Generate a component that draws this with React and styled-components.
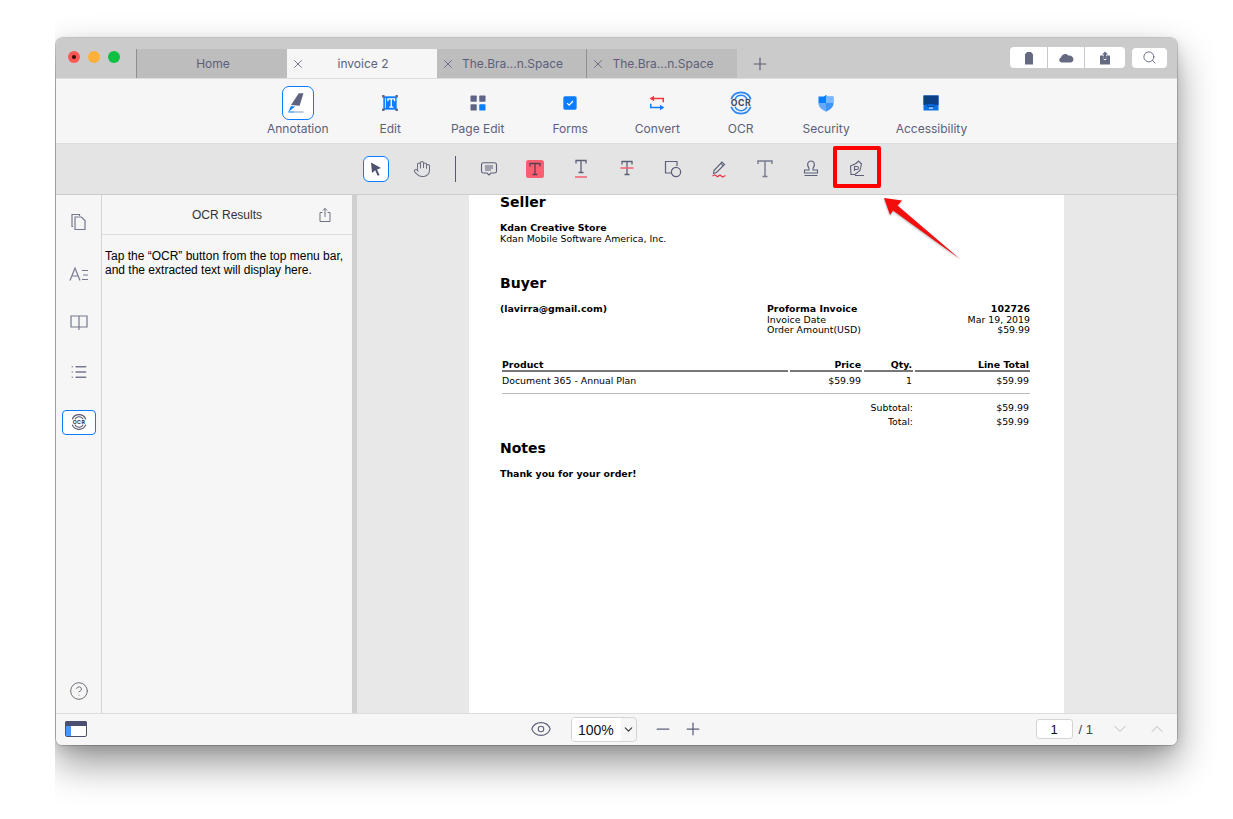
import React from "react";
import styled, { createGlobalStyle } from "styled-components";
import {
  X, Plus, Minus, Search, Hand, Eye, ChevronDown, ChevronUp, CircleHelp, List,
} from "lucide-react";

const INK = "#5c5f7a";
const BLUE = "#0a7cff";

const GlobalStyle = createGlobalStyle`
  html, body { margin: 0; padding: 0; background: #fff; }
  body { font-family: Inter, "Liberation Sans", sans-serif; }
  * { box-sizing: border-box; }
`;

const Clip = styled.div`
  width: 1178px;
  height: 819px;
  margin-left: 55px;
  padding: 38px 0 0 1px;
  overflow: hidden;
`;
const Spill = styled.div`
  width: 1121px;
`;
const Window = styled.div`
  position: relative;
  width: 1121px;
  height: 707px;
  display: flex;
  flex-direction: column;
  border-radius: 6px;
  overflow: hidden;
`;
const WindowShadow = styled.div`
  border-radius: 6px;
  box-shadow: 0 0 0 0.5px rgba(0, 0, 0, 0.35), 0 18px 38px rgba(0, 0, 0, 0.42), 0 4px 12px rgba(0, 0, 0, 0.12);
`;

/* title bar */
const TitleBar = styled.div`
  height: 41px;
  flex: none;
  display: flex;
  align-items: flex-end;
  padding-left: 12px;
  background: #cbcbcb;
  border-bottom: 1px solid #dedede;
`;
const Lights = styled.div`
  display: flex;
  gap: 8px;
  align-self: flex-start;
  margin-top: 13px;
  margin-right: 16px;
`;
const Light = styled.span`
  width: 12px;
  height: 12px;
  border-radius: 50%;
  background: ${(p) => p.$color};
  display: flex;
  align-items: center;
  justify-content: center;
`;
const LightDot = styled.span`
  width: 4px;
  height: 4px;
  border-radius: 50%;
  background: #3a0a08;
`;
const Tabs = styled.div`
  display: flex;
  height: 29px;
  border-left: 1px solid #8f8f8f;
`;
const Tab = styled.div`
  width: 150px;
  display: grid;
  grid-template-columns: 21px 1fr 19px;
  align-items: center;
  color: ${INK};
  font-size: 12px;
  text-align: center;
  white-space: nowrap;
  background: ${(p) => (p.$active ? "#f6f6f6" : "#bdbdbd")};
  border-right: ${(p) => (p.$line ? "1px solid #8f8f8f" : "none")};
`;
const TabClose = styled.span`
  display: flex;
  padding-left: 4px;
  color: ${INK};
`;
const NewTab = styled.span`
  display: flex;
  margin: 0 0 4px 13px;
  color: ${INK};
`;
const TitleRight = styled.div`
  margin-left: auto;
  align-self: flex-start;
  display: flex;
  align-items: center;
  gap: 7px;
  margin-top: 9px;
  margin-right: 10px;
`;
const ActionGroup = styled.div`
  display: flex;
  height: 21px;
  border-radius: 4px;
  background: #fff;
`;
const ActionCell = styled.span`
  width: ${(p) => p.$w}px;
  display: flex;
  align-items: center;
  justify-content: center;
  border-right: ${(p) => (p.$last ? "none" : "1px solid #c8c8c8")};
`;
const SearchBtn = styled.span`
  width: 35px;
  height: 20px;
  display: flex;
  align-items: center;
  justify-content: center;
  border-radius: 4px;
  background: #fff;
  color: ${INK};
`;

/* main toolbar */
const ToolBar = styled.div`
  height: 65px;
  flex: none;
  display: flex;
  align-items: flex-start;
  padding-left: 211px;
  background: #f6f6f6;
  border-bottom: 1px solid #dcdcdc;
`;
const Tool = styled.div`
  display: flex;
  flex-direction: column;
  align-items: center;
  margin-left: ${(p) => p.$gap}px;
  font-size: 12px;
  line-height: 15px;
  color: ${INK};
  white-space: nowrap;
`;
const ToolIcon = styled.div`
  width: ${(p) => (p.$active ? 32 : 20)}px;
  height: 34px;
  margin: 7px 0 1px;
  display: flex;
  align-items: center;
  justify-content: center;
  border-radius: 7px;
  border: ${(p) => (p.$active ? `1px solid ${BLUE}` : "none")};
  background: ${(p) => (p.$active ? "#fff" : "transparent")};
`;

/* annotation bar */
const AnnotBar = styled.div`
  height: 51px;
  flex: none;
  display: flex;
  align-items: center;
  padding: 0 0 1px 297px;
  background: #e4e4e4;
  border-bottom: 1px solid #cdcdcd;
`;
const AnnotCell = styled.div`
  width: 46px;
  height: 26px;
  display: flex;
  align-items: center;
  justify-content: center;
`;
const SelectBtn = styled.div`
  width: 26px;
  height: 26px;
  display: flex;
  align-items: center;
  justify-content: center;
  border-radius: 6px;
  border: 1px solid ${BLUE};
  background: #fff;
`;
const AnnotDivider = styled.div`
  width: 1px;
  height: 26px;
  margin: 0 10px;
  background: #55586f;
`;

/* body */
const Main = styled.div`
  flex: 1;
  min-height: 0;
  display: flex;
`;
const Rail = styled.div`
  width: 46px;
  flex: none;
  display: flex;
  flex-direction: column;
  align-items: center;
  padding: 2px 0 12px;
  background: #f6f6f6;
  border-right: 1px solid #d4d4d4;
`;
const RailItem = styled.div`
  height: 50px;
  display: flex;
  align-items: center;
  justify-content: center;
  color: #75788e;
`;
const RailActive = styled.div`
  width: 34px;
  height: 25px;
  display: flex;
  align-items: center;
  justify-content: center;
  border-radius: 4px;
  border: 1px solid ${BLUE};
  background: #fff;
`;
const RailHelp = styled.div`
  margin-top: auto;
  display: flex;
  color: #6f7178;
`;
const Panel = styled.div`
  width: 250px;
  flex: none;
  background: #f6f6f6;
  font-family: "Liberation Sans", Arial, sans-serif;
`;
const PanelHead = styled.div`
  height: 40px;
  display: flex;
  align-items: center;
  justify-content: space-between;
  padding: 0 20px 0 90px;
  font-size: 12px;
  color: #333;
  border-bottom: 1px solid #dcdcdc;
`;
const PanelText = styled.p`
  margin: 14px 0 0 3px;
  font-size: 12px;
  line-height: 14px;
  color: #000;
  white-space: nowrap;
`;
const Splitter = styled.div`
  width: 5px;
  flex: none;
  background: #d0d0d0;
`;
const DocArea = styled.div`
  flex: 1;
  padding-left: 112px;
  background: #e8e8e8;
`;

/* invoice page */
const Page = styled.div`
  width: 595px;
  height: 100%;
  padding: 0 34px 0 31px;
  background: #fff;
  color: #000;
  font-family: "DejaVu Sans", sans-serif;
  font-size: 9.4px;
  line-height: 11px;
`;
const Heading = styled.h2`
  margin: ${(p) => p.$top}px 0 0;
  font-size: 14px;
  line-height: 14px;
  font-weight: 700;
`;
const Strong = styled.div`
  margin-top: ${(p) => p.$top || 0}px;
  font-weight: 700;
`;
const InfoGrid = styled.div`
  display: grid;
  grid-template-columns: 267px 1fr auto;
  margin-top: 14px;
  line-height: 10.5px;
`;
const RightCol = styled.div`
  text-align: right;
`;
const Table = styled.div`
  margin: 23px 0 0 2px;
`;
const TableRow = styled.div`
  display: grid;
  grid-template-columns: 288px 74px 51px 115px;
  border-bottom: ${(p) => (p.$rule ? "1px solid #bbb" : "none")};
  padding-bottom: ${(p) => p.$pb || 0}px;
  margin-top: ${(p) => p.$top || 0}px;
`;
const HeadCell = styled.div`
  height: 13px;
  margin-right: ${(p) => (p.$last ? 0 : 2)}px;
  padding-right: 1px;
  font-weight: 700;
  text-align: ${(p) => (p.$left ? "left" : "right")};
  border-bottom: 2px solid #777;
`;
const Cell = styled.div`
  margin-right: ${(p) => (p.$last ? 0 : 2)}px;
  padding-right: ${(p) => (p.$span ? 0 : 1)}px;
  text-align: ${(p) => (p.$left ? "left" : "right")};
  grid-column: ${(p) => p.$span || "auto"};
`;

/* status bar */
const StatusBar = styled.div`
  height: 32px;
  flex: none;
  display: flex;
  align-items: center;
  padding: 0 10px 1px 9px;
  background: #f6f6f6;
  border-top: 1px solid #dcdcdc;
`;
const Center = styled.div`
  display: flex;
  align-items: center;
  color: ${INK};
  margin-left: 443px;
`;
const Zoom = styled.div`
  width: 66px;
  height: 25px;
  margin: 0 16px 0 19px;
  display: flex;
  align-items: center;
  border: 1px solid #d4d4d4;
  border-radius: 4px;
  background: #f6f6f6;
  overflow: hidden;
`;
const ZoomValue = styled.span`
  width: 49px;
  height: 23px;
  padding: 3px 0 0 6px;
  background: #fff;
  font-family: "Liberation Sans", Arial, sans-serif;
  font-size: 14px;
  line-height: 18px;
  color: #111;
`;
const ZoomCaret = styled.span`
  display: flex;
  margin-left: 1px;
  color: #333;
`;
const ZoomStep = styled.span`
  display: flex;
  margin-right: ${(p) => p.$gap || 0}px;
`;
const Pager = styled.div`
  margin-left: auto;
  display: flex;
  align-items: center;
  font-family: "Liberation Sans", Arial, sans-serif;
  font-size: 13px;
  color: #444;
`;
const PageInput = styled.span`
  width: 37px;
  height: 20px;
  margin-right: 6px;
  border: 1px solid #d4d4d4;
  border-radius: 3px;
  background: #fff;
  color: #111;
  text-align: center;
  line-height: 19px;
`;
const PagerArrow = styled.span`
  display: flex;
  margin-left: ${(p) => p.$gap}px;
  color: #b9bac4;
`;

/* callouts on top of the screenshot */
const CalloutBox = styled.div`
  position: absolute;
  left: 777px;
  top: 108px;
  width: 48px;
  height: 42px;
  border: 4px solid #fe0000;
  border-radius: 2px;
`;
const CalloutArrow = styled.svg`
  position: absolute;
  left: 764px;
  top: 152px;
  filter: drop-shadow(0 1px 1px rgba(0, 0, 0, 0.35));
`;
const OcrSvg = styled.svg`
  flex: none;
`;

const Glyph = ({ w = 24, h = 24, children, stroke = INK, sw = 1.2, fill = "none" }) => (
  <svg width={w} height={h} viewBox={`0 0 ${w} ${h}`} fill={fill} stroke={stroke} strokeWidth={sw}>
    {children}
  </svg>
);

const SerifT = ({ x = 12, y = 4, h = 14, w = 12, stroke = INK, sw = 1.3 }) => (
  <g stroke={stroke} strokeWidth={sw}>
    <path d={`M${x - w / 2} ${y + 3}V${y}H${x + w / 2}V${y + 3}`} />
    <path d={`M${x} ${y}V${y + h}M${x - 2.5} ${y + h}H${x + 2.5}`} />
  </g>
);

const AnnotationIcon = () => (
  <Glyph stroke="none">
    <path d="M12.8 2.3H17.5L13.6 14.8L5 14Z" fill="#5e6380" />
    <path d="M5 15L2.3 21L9 15.4Z" fill={BLUE} />
    <path d="M2.3 20.5H8V21.5H2.3Z" fill={BLUE} />
    <path d="M8 20.5H17.5V21.5H8Z" fill="#7f95c8" />
  </Glyph>
);

const EditIcon = () => (
  <Glyph>
    <rect x="4" y="4" width="16" height="16" fill={BLUE} stroke="none" />
    <g fill="#5e6380" stroke="none">
      <rect x="2.5" y="2.5" width="3" height="3" rx=".6" />
      <rect x="18.5" y="2.5" width="3" height="3" rx=".6" />
      <rect x="2.5" y="18.5" width="3" height="3" rx=".6" />
      <rect x="18.5" y="18.5" width="3" height="3" rx=".6" />
    </g>
    <path d="M6.5 6V18" stroke="#fff" strokeWidth="1" />
    <SerifT x={13.5} y={7} h={10} w={8} stroke="#fff" sw={1.6} />
  </Glyph>
);

const PageEditIcon = () => (
  <Glyph stroke="none">
    <rect x="3" y="3" width="7.5" height="7.5" rx="1" fill="#5e6488" />
    <rect x="13.5" y="3" width="7.5" height="7.5" rx="1" fill="#5e6488" />
    <rect x="3" y="13.5" width="7.5" height="7.5" rx="1" fill="#5e6488" />
    <rect x="13.5" y="13.5" width="7.5" height="7.5" rx="1" fill={BLUE} />
  </Glyph>
);

const FormsIcon = () => (
  <Glyph stroke="none">
    <rect x="4" y="4" width="16" height="16" rx="2" fill={BLUE} />
    <path d="M8.5 12.2L11 14.6L15.6 9.6" stroke="#fff" strokeWidth="1.5" fill="none" />
  </Glyph>
);

const ConvertIcon = () => (
  <Glyph>
    <g stroke="#f5333f" strokeWidth="1.8">
      <path d="M5 6.5H19.5V11" />
    </g>
    <path d="M8.5 3.2L3.2 6.5L8.5 9.8Z" fill="#f5333f" stroke="none" />
    <g stroke={BLUE} strokeWidth="1.8">
      <path d="M4.5 13V17.5H19" />
    </g>
    <path d="M15.5 14.2L20.8 17.5L15.5 20.8Z" fill={BLUE} stroke="none" />
  </Glyph>
);

const OcrIcon = ({ arc = "#2a86f0", ink = "#3d4560", size = 26, label = 8 }) => (
  <OcrSvg width={size} height={size} viewBox="0 0 24 24" fill="none">
    <path d="M3 8.5A9.6 9.6 0 0 1 21 8.5" stroke={arc} strokeWidth="1.6" />
    <path d="M6.5 8.5A6 6 0 0 1 17.5 8.5" stroke={arc} strokeWidth="1.4" />
    <path d="M3 15.5A9.6 9.6 0 0 0 21 15.5" stroke={arc} strokeWidth="1.6" />
    <path d="M6.5 15.5A6 6 0 0 0 17.5 15.5" stroke={arc} strokeWidth="1.4" />
    <text x="12" y="14.9" textAnchor="middle" fontFamily="Inter, sans-serif" fontSize={label} fontWeight="700" letterSpacing=".6" fill={ink}>
      OCR
    </text>
  </OcrSvg>
);

const ShieldIcon = () => (
  <Glyph stroke="none">
    <path d="M12 2.5L14.5 4.2H21V13C21 17.5 16 20.5 12 22.5Z" fill="#3d94fb" />
    <path d="M12 2.5L9.5 4.2H3V12H12Z" fill={BLUE} />
    <path d="M3 12V13C3 17.5 8 20.5 12 22.5V12Z" fill="#66aaff" />
    <path d="M12 12H21V4.2H14.5L12 2.5Z" fill="#7db8fc" />
  </Glyph>
);

const AccessIcon = () => (
  <Glyph stroke="none">
    <rect x="3" y="3" width="18" height="18" fill="#0a70e6" />
    <rect x="3" y="3" width="18" height="10.5" fill="#0b3f86" />
    <path d="M3 13.5H7.5L9 15.5H15L16.5 13.5H21V14.5H17L15.5 16.5H8.5L7 14.5H3Z" fill="#0a3f92" />
    <rect x="9.5" y="17.5" width="5" height="1.2" fill="#fff" />
  </Glyph>
);

const CursorIcon = () => (
  <Glyph w={14} h={16} stroke="none">
    <path d="M2 1.5L12 7L8 8.4L10.6 14L8.6 14.8L6.2 9.2L3 12Z" fill="#4e5170" />
  </Glyph>
);

const NoteIcon = () => (
  <Glyph w={18} h={18} sw={1.1}>
    <path d="M3.5 2.8H14.5Q16.5 2.8 16.5 4.8V11.2Q16.5 13 14.5 13H11L9 15L7 13H3.5Q1.5 13 1.5 11.2V4.8Q1.5 2.8 3.5 2.8Z" />
    <path d="M5 6H13M5 8H13M5 10H11" />
  </Glyph>
);

const HighlightIcon = () => (
  <Glyph w={18} h={18} stroke="none">
    <rect width="18" height="18" rx="2.5" fill="#f95f70" />
    <SerifT x={9} y={3.5} h={11} w={10} stroke="#55405a" sw={1.3} />
  </Glyph>
);

const UnderlineIcon = () => (
  <Glyph w={18} h={22}>
    <SerifT x={9} y={2.5} h={12} w={10} />
    <path d="M3 19H15" stroke="#f4606f" strokeWidth="1.6" />
  </Glyph>
);

const StrikeIcon = () => (
  <Glyph w={18} h={20}>
    <SerifT x={9} y={2.5} h={13} w={10} />
    <path d="M2.5 9H15.5" stroke="#f4606f" strokeWidth="1.6" />
  </Glyph>
);

const ShapeIcon = () => (
  <Glyph w={18} h={18} sw={1.2}>
    <path d="M7 13H1.5V1.5H13V6" />
    <circle cx="12" cy="12" r="4.6" />
  </Glyph>
);

const PencilIcon = () => (
  <Glyph w={18} h={20} sw={1.1}>
    <path d="M4 11.5L12 3L14.5 5.5L6.5 13.5L3.5 14.5Z" />
    <path d="M10.8 4.3L13.3 6.8" />
    <path d="M2.5 17L5 15.8L7.5 17.8L10 16L12.5 18L15.5 16.5" stroke="#ef2f3f" />
  </Glyph>
);

const TextIcon = () => (
  <Glyph w={18} h={20} sw={1.5}>
    <SerifT x={9} y={2} h={15.5} w={14} stroke="#767990" sw={1.4} />
  </Glyph>
);

const StampIcon = () => (
  <Glyph w={18} h={20} sw={1.1}>
    <path d="M7 9.5C4 4.5 6.5 2 9 2S14 4.5 11 9.5V11H15.5V14H2.5V11H7Z" />
    <path d="M2.5 16.5H15.5" strokeWidth="1.2" />
  </Glyph>
);

const SignIcon = () => (
  <Glyph w={18} h={20} sw={1.1}>
    <path d="M2.5 7L8 4.5L10.5 2L13.5 5L12 11.5L7 15.5H3Z" />
    <path d="M6.5 12V7.5H9Q10.5 7.5 10.5 9T9 10.5H6.5" />
    <path d="M7 16.5H16" />
  </Glyph>
);

const PagesIcon = () => (
  <Glyph w={18} h={20} sw={1.2} stroke="#75788e">
    <path d="M3 14.5H2V2.5H9.5V4" />
    <path d="M5 5H11.5L15 8.5V17.5H5Z" />
  </Glyph>
);

const TocIcon = () => (
  <Glyph w={20} h={22} sw={1.2} stroke="#75788e">
    <path d="M1 19.5L6 7L11 19.5M3 15H9" />
    <path d="M13 9.5H19M14 14H19M13 18.5H19" />
  </Glyph>
);

const BookIcon = () => (
  <Glyph w={20} h={18} sw={1.2} stroke="#75788e">
    <path d="M2 3H10V14H2ZM10 3H18V14H10ZM10 14V17" />
  </Glyph>
);

const ShareIcon = () => (
  <Glyph w={14} h={16} sw={1} stroke="#6f7280">
    <path d="M4.5 5.5H2V14.5H12V5.5H9.5" />
    <path d="M7 10V1.5M4.8 3.5L7 1.3L9.2 3.5" />
  </Glyph>
);

const TagIcon = () => (
  <Glyph w={10} h={14} stroke="none">
    <path d="M3 1H7L9 3.5V13.5H1V3.5Z" fill="#666a80" />
  </Glyph>
);

const CloudIcon = () => (
  <Glyph w={16} h={11} stroke="none">
    <path d="M4 10.5C0.8 10.5 0.3 6.5 3 5.5C3.6 2 8.6 0.6 10.4 3.6C13 3 15.6 5 15.4 7.6C15.2 9.4 14 10.5 12.5 10.5Z" fill="#666a80" />
  </Glyph>
);

const UploadIcon = () => (
  <Glyph w={12} h={14} stroke="none">
    <path d="M1 4.5H4.8V9H7.2V4.5H11V13.5H1Z" fill="#666a80" />
    <path d="M6 0.5L9 3.6H7V8H5V3.6H3Z" fill="#666a80" />
  </Glyph>
);

const SidebarToggle = () => (
  <svg width="22" height="16" viewBox="0 0 22 16">
    <rect x=".5" y=".5" width="21" height="15" rx="1.5" fill="#fff" stroke="#4b4f70" />
    <rect x="1" y="5" width="5" height="10" fill="#4a96f8" />
    <path d="M2 0H20Q22 0 22 2V5H0V2Q0 0 2 0Z" fill="#4b4f70" />
  </svg>
);

const mainTools = [
  { label: "Annotation", gap: 0, icon: <AnnotationIcon />, active: true },
  { label: "Edit", gap: 51, icon: <EditIcon /> },
  { label: "Page Edit", gap: 50, icon: <PageEditIcon /> },
  { label: "Forms", gap: 48, icon: <FormsIcon /> },
  { label: "Convert", gap: 47, icon: <ConvertIcon /> },
  { label: "OCR", gap: 48, icon: <OcrIcon /> },
  { label: "Security", gap: 49, icon: <ShieldIcon /> },
  { label: "Accessibility", gap: 46, icon: <AccessIcon /> },
];

const annotTools = [
  <NoteIcon />, <HighlightIcon />, <UnderlineIcon />, <StrikeIcon />, <ShapeIcon />,
  <PencilIcon />, <TextIcon />, <StampIcon />, <SignIcon />,
];

function App() {
  return (
    <Clip>
      <GlobalStyle />
      <Spill>
        <WindowShadow>
          <Window>
            <TitleBar>
              <Lights>
                <Light $color="#fc5753"><LightDot /></Light>
                <Light $color="#fdb13b" />
                <Light $color="#0cc142" />
              </Lights>
              <Tabs>
                <Tab><span /><span>Home</span><span /></Tab>
                <Tab $active>
                  <TabClose><X size={14} strokeWidth={1.4} /></TabClose>
                  <span>invoice 2</span><span />
                </Tab>
                <Tab $line>
                  <TabClose><X size={14} strokeWidth={1.4} /></TabClose>
                  <span>The.Bra...n.Space</span><span />
                </Tab>
                <Tab>
                  <TabClose><X size={14} strokeWidth={1.4} /></TabClose>
                  <span>The.Bra...n.Space</span><span />
                </Tab>
              </Tabs>
              <NewTab><Plus size={20} strokeWidth={1.4} /></NewTab>
              <TitleRight>
                <ActionGroup>
                  <ActionCell $w={38}><TagIcon /></ActionCell>
                  <ActionCell $w={37}><CloudIcon /></ActionCell>
                  <ActionCell $w={40} $last><UploadIcon /></ActionCell>
                </ActionGroup>
                <SearchBtn><Search size={15} strokeWidth={1.4} /></SearchBtn>
              </TitleRight>
            </TitleBar>

            <ToolBar>
              {mainTools.map((t) => (
                <Tool key={t.label} $gap={t.gap}>
                  <ToolIcon $active={t.active}>{t.icon}</ToolIcon>
                  {t.label}
                </Tool>
              ))}
            </ToolBar>

            <AnnotBar>
              <AnnotCell><SelectBtn><CursorIcon /></SelectBtn></AnnotCell>
              <AnnotCell><Hand size={18} strokeWidth={1.4} color="#6a6d80" /></AnnotCell>
              <AnnotDivider />
              {annotTools.map((icon, i) => (
                <AnnotCell key={i}>{icon}</AnnotCell>
              ))}
            </AnnotBar>

            <Main>
              <Rail>
                <RailItem><PagesIcon /></RailItem>
                <RailItem><TocIcon /></RailItem>
                <RailItem><BookIcon /></RailItem>
                <RailItem><List size={18} strokeWidth={1.8} /></RailItem>
                <RailItem>
                  <RailActive><OcrIcon size={18} arc="#55586f" ink="#333" label={7} /></RailActive>
                </RailItem>
                <RailHelp><CircleHelp size={20} strokeWidth={1.2} /></RailHelp>
              </Rail>

              <Panel>
                <PanelHead>
                  OCR Results
                  <ShareIcon />
                </PanelHead>
                <PanelText>
                  Tap the “OCR” button from the top menu bar,
                  <br />
                  and the extracted text will display here.
                </PanelText>
              </Panel>
              <Splitter />

              <DocArea>
                <Page>
                  <Heading $top={0}>Seller</Heading>
                  <Strong $top={13}>Kdan Creative Store</Strong>
                  <div>Kdan Mobile Software America, Inc.</div>
                  <Heading $top={32}>Buyer</Heading>
                  <InfoGrid>
                    <Strong>(lavirra@gmail.com)</Strong>
                    <div>
                      <Strong>Proforma Invoice</Strong>
                      <div>Invoice Date</div>
                      <div>Order Amount(USD)</div>
                    </div>
                    <RightCol>
                      <Strong>102726</Strong>
                      <div>Mar 19, 2019</div>
                      <div>$59.99</div>
                    </RightCol>
                  </InfoGrid>
                  <Table>
                    <TableRow>
                      <HeadCell $left>Product</HeadCell>
                      <HeadCell>Price</HeadCell>
                      <HeadCell>Qty.</HeadCell>
                      <HeadCell $last>Line Total</HeadCell>
                    </TableRow>
                    <TableRow $rule $pb={7} $top={3}>
                      <Cell $left>Document 365 - Annual Plan</Cell>
                      <Cell>$59.99</Cell>
                      <Cell>1</Cell>
                      <Cell $last>$59.99</Cell>
                    </TableRow>
                    <TableRow $top={8}>
                      <Cell $span="1 / span 3">Subtotal:</Cell>
                      <Cell $last>$59.99</Cell>
                    </TableRow>
                    <TableRow $top={3}>
                      <Cell $span="1 / span 3">Total:</Cell>
                      <Cell $last>$59.99</Cell>
                    </TableRow>
                  </Table>
                  <Heading $top={14}>Notes</Heading>
                  <Strong $top={13}>Thank you for your order!</Strong>
                </Page>
              </DocArea>
            </Main>

            <StatusBar>
              <SidebarToggle />
              <Center>
                <Eye size={22} strokeWidth={1.2} />
                <Zoom>
                  <ZoomValue>100%</ZoomValue>
                  <ZoomCaret><ChevronDown size={13} strokeWidth={2} /></ZoomCaret>
                </Zoom>
                <ZoomStep $gap={10}><Minus size={20} strokeWidth={1.5} /></ZoomStep>
                <ZoomStep><Plus size={20} strokeWidth={1.5} /></ZoomStep>
              </Center>
              <Pager>
                <PageInput>1</PageInput>
                / 1
                <PagerArrow $gap={17}><ChevronDown size={20} strokeWidth={1.2} /></PagerArrow>
                <PagerArrow $gap={17}><ChevronUp size={20} strokeWidth={1.2} /></PagerArrow>
              </Pager>
            </StatusBar>

            <CalloutBox />
            <CalloutArrow width="150" height="75" viewBox="820 190 150 75">
              <path d="M884 198L902 200.5L897.5 205.5L960 259L893 210.5L890 215Z" fill="#f30d0d" />
            </CalloutArrow>
          </Window>
        </WindowShadow>
      </Spill>
    </Clip>
  );
}

export default App;
